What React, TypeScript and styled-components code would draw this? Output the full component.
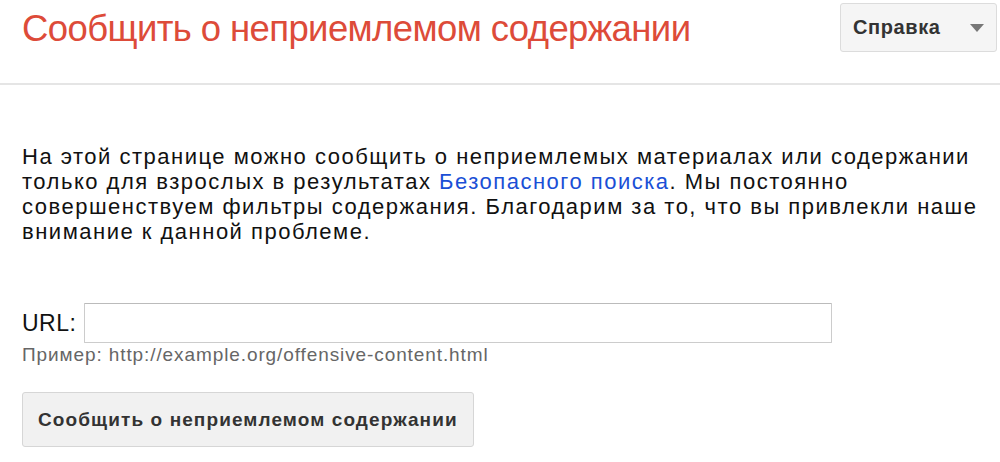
import React from "react"
import styled, { createGlobalStyle } from "styled-components"

const GlobalStyle = createGlobalStyle`
  html, body {
    margin: 0;
    padding: 0;
    background: #fff;
    font-family: "Liberation Sans", Arial, sans-serif;
    color: #222;
  }
`

const Page = styled.div`
  width: 1000px;
  height: 462px;
  overflow: hidden;
`

const Header = styled.header`
  display: flex;
  align-items: flex-start;
  justify-content: space-between;
  height: 83px;
  border-bottom: 2px solid #e5e5e5;
  padding: 0 3px 0 22px;
`

const Title = styled.h1`
  margin: 8px 0 0;
  font-size: 36.5px;
  font-weight: normal;
  color: #dd4b39;
  letter-spacing: -0.6px;
`

const HelpButton = styled.button`
  display: flex;
  align-items: center;
  justify-content: space-between;
  margin-top: 3px;
  width: 157px;
  height: 49px;
  padding: 0 12px 0 12px;
  background: #f5f5f5;
  border: 1px solid #dcdcdc;
  border-radius: 3px;
  font-family: "Liberation Sans", Arial, sans-serif;
  font-size: 20px;
  font-weight: bold;
  letter-spacing: 0.6px;
  color: #333;
`

const Arrow = styled.span`
  width: 0;
  height: 0;
  border-left: 7px solid transparent;
  border-right: 7px solid transparent;
  border-top: 8px solid #777;
`

const Content = styled.main`
  padding: 59px 8px 0 22px;
`

const Intro = styled.p`
  margin: 0;
  font-size: 22px;
  line-height: 25px;
  letter-spacing: 1.5px;
  color: #111;
`

const Link = styled.a`
  color: #1a4fd6;
  text-decoration: none;
`

const Form = styled.form`
  margin-top: 59px;
`

const UrlRow = styled.div`
  display: flex;
  align-items: center;
  gap: 8px;
`

const Label = styled.label`
  font-size: 23px;
  letter-spacing: 0.5px;
  color: #111;
`

const UrlInput = styled.input`
  width: 748px;
  height: 40px;
  box-sizing: border-box;
  border: 1px solid #ccc;
  border-top-color: #bbb;
  border-radius: 1px;
  font-size: 18px;
  padding: 0 8px;
`

const Hint = styled.div`
  margin-top: 1px;
  font-size: 19px;
  line-height: 22px;
  letter-spacing: 0.9px;
  color: #666;
`

const SubmitButton = styled.button`
  margin-top: 26px;
  height: 55px;
  padding: 0 15px;
  background: #f1f1f1;
  border: 1px solid #d6d6d6;
  border-radius: 3px;
  font-family: "Liberation Sans", Arial, sans-serif;
  font-size: 19px;
  font-weight: bold;
  color: #333;
  letter-spacing: 1.1px;
`

export default function App() {
  return (
    <Page>
      <GlobalStyle />
      <Header>
        <Title>Сообщить о неприемлемом содержании</Title>
        <HelpButton type="button">
          Справка
          <Arrow />
        </HelpButton>
      </Header>
      <Content>
        <Intro>
          На этой странице можно сообщить о неприемлемых материалах или содержании
          только для взрослых в результатах <Link href="#">Безопасного поиска</Link>. Мы постоянно
          совершенствуем фильтры содержания. Благодарим за то, что вы привлекли наше
          внимание к данной проблеме.
        </Intro>
        <Form onSubmit={(e) => e.preventDefault()}>
          <UrlRow>
            <Label htmlFor="url">URL:</Label>
            <UrlInput id="url" type="text" />
          </UrlRow>
          <Hint>Пример: http://example.org/offensive-content.html</Hint>
          <SubmitButton type="submit">Сообщить о неприемлемом содержании</SubmitButton>
        </Form>
      </Content>
    </Page>
  )
}
